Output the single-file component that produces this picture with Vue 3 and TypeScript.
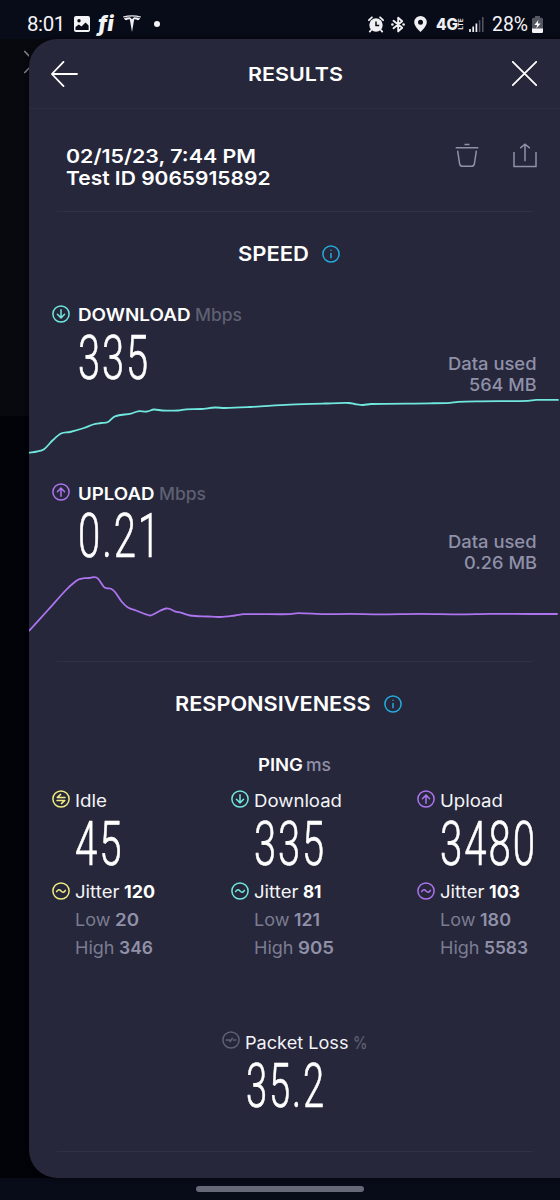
<script setup lang="ts">
import { h } from 'vue'

interface LabelProps { text: string; w: number; cap?: number }

// Single line of text in a box as tall as its capitals, fitted to a set width.
const Label = (p: LabelProps) => {
  const cap = p.cap ?? 12.5
  return h('svg', { class: 'label', width: p.w, height: cap, overflow: 'visible' }, [
    h('text', {
      x: 0, y: cap, textLength: p.w, lengthAdjust: 'spacingAndGlyphs',
      'font-size': cap / 0.727,
    }, p.text),
  ])
}
Label.props = ['text', 'w', 'cap']

const Digits = (p: { text: string; w: number }) =>
  h('svg', { class: 'digits', width: p.w, height: 45, overflow: 'visible' }, [
    h('text', { x: 1, y: 44.4, textLength: p.w, lengthAdjust: 'spacingAndGlyphs', 'font-size': 61.5 }, p.text),
  ])
Digits.props = ['text', 'w']

const glyphs: Record<string, string> = {
  down: 'M9 4.8V12.6M5.4 9.3L9 12.9L12.6 9.3',
  up: 'M9 13.2V5.2M5.4 8.7L9 5.1L12.6 8.7',
  idle: 'M13 7.6H5.2L8.6 4.4M5 10.4H12.8L9.4 13.6',
  wave: 'M4.6 9.7C6 7.2 7.6 7.4 9 9C10.4 10.6 12 10.8 13.4 8.3',
  loss: 'M4.2 9H7.6M7.2 8.8L8.2 10.6L10.3 7.2M11.4 9H13.8',
  info: 'M9 8.6V12.8M9 5.2V5.3',
}
const Ring = (p: { kind: string }) =>
  h('svg', { class: 'ring', width: 18, height: 18, viewBox: '0 0 18 18' }, [
    h('circle', { cx: 9, cy: 9, r: 8.1 }),
    h('path', { d: glyphs[p.kind] }),
  ])
Ring.props = ['kind']

type Pt = [number, number]
function smooth(pts: Pt[]): string {
  let d = `M${pts[0][0]} ${pts[0][1]}`
  for (let i = 0; i < pts.length - 1; i++) {
    const a = pts[Math.max(0, i - 1)], b = pts[i], c = pts[i + 1], e = pts[Math.min(pts.length - 1, i + 2)]
    const k = (c[0] - b[0]) / 3
    const s1 = (c[1] - a[1]) / (c[0] - a[0])
    const s2 = (e[1] - b[1]) / (e[0] - b[0])
    d += `C${b[0] + k} ${b[1] + k * s1} ${c[0] - k} ${c[1] - k * s2} ${c[0]} ${c[1]}`
  }
  return d
}

const downPts: Pt[] = [[29, 452.7], [37, 451.5], [44, 449.3], [53, 440], [61, 433.5], [70, 432], [84, 428], [93, 424.5], [101, 423], [108, 422], [115, 416.3], [131, 413.6], [138, 411.3], [147, 411.5], [154, 409.5], [162, 410.5], [178, 410.5], [186, 409.3], [201, 409], [215, 407.5], [225, 408], [250, 407], [290, 404.7], [325, 403.5], [349, 403], [356, 404.3], [363, 405], [371, 404], [430, 403.3], [450, 402.8], [458, 401.8], [480, 401.3], [528, 400.8], [536, 399.9], [558, 399.9]]
const upPts: Pt[] = [[29.5, 630.5], [48, 610], [66, 590], [73, 583.5], [79, 579.3], [84, 578.2], [89, 578], [94, 577.2], [98, 578.6], [104, 587], [107, 588.3], [111, 588.8], [115, 592], [122, 602], [128, 607.5], [136, 610.5], [150, 615.5], [154, 614], [160, 610.7], [166, 608.5], [170, 609], [175, 611.3], [181, 612.7], [190, 615.5], [208, 616.5], [220, 617], [235, 615.5], [244, 614.2], [290, 614.2], [298, 613.2], [325, 614.2], [350, 613.9], [380, 614.3], [420, 613.8], [460, 614.3], [490, 613.8], [530, 614], [557, 614]]

const speeds = [
  { name: 'DOWNLOAD', nameW: 112.5, kind: 'down', tone: 'teal', value: '335', valueW: 72, used: '564 MB', usedW: 67.5, box: '29 391 531 70', path: smooth(downPts) },
  { name: 'UPLOAD', nameW: 76.5, kind: 'up', tone: 'violet', value: '0.21', valueW: 84, used: '0.26 MB', usedW: 73, box: '29 569 531 70', path: smooth(upPts) },
]

const pings = [
  { name: 'Idle', nameW: 32, kind: 'idle', tone: 'yellow', value: '45', valueW: 48.5, jitter: '120', jitterW: 31, low: '20', lowW: 24, high: '346', highW: 34 },
  { name: 'Download', nameW: 88, kind: 'down', tone: 'teal', value: '335', valueW: 72, jitter: '81', jitterW: 18.5, low: '121', lowW: 26, high: '905', highW: 36 },
  { name: 'Upload', nameW: 63, kind: 'up', tone: 'violet', value: '3480', valueW: 97, jitter: '103', jitterW: 31, low: '180', lowW: 31, high: '5583', highW: 44 },
]
</script>

<template>
  <div class="screen">
    <div class="status">
      <div class="status-left">
        <span class="time">8:01</span>
        <svg class="s-photo" width="16" height="16" viewBox="0 0 16 16">
          <rect width="16" height="16" rx="2" fill="#f4f4f6" />
          <circle cx="5" cy="4.8" r="1.7" fill="#080b18" />
          <path d="M1.5 14V11L4.8 8.4L7.4 10.4L11.5 6.6L14.6 9.5V14Z" fill="#080b18" />
        </svg>
        <span class="fi">fi</span>
        <svg class="s-tesla" width="18" height="17" viewBox="0 0 18 17">
          <path d="M0 1.6Q9 -1.3 18 1.6L17.6 2.6Q9 .2 .4 2.6ZM.9 3.3Q4 2.2 7 2.2L9 4.2L11 2.2Q14 2.2 17.1 3.3Q16.3 5.2 14.6 5.2Q13.6 4.2 11.2 4.2L9 17L6.8 4.2Q4.4 4.2 3.4 5.2Q1.7 5.2 .9 3.3Z" fill="#eeeef2" />
        </svg>
        <i class="dot" />
      </div>
      <div class="status-right">
        <svg width="16" height="17" viewBox="0 0 16 17">
          <circle cx="8" cy="9" r="6.7" fill="#f0f0f2" />
          <path d="M8 5.6V9.4H11.2" fill="none" stroke="#080b18" stroke-width="1.5" />
          <path d="M.9 4.2L3.9 1.3M15.1 4.2L12.1 1.3M3.2 14L1.8 15.6M12.8 14L14.2 15.6" stroke="#f0f0f2" stroke-width="1.8" stroke-linecap="round" />
        </svg>
        <svg class="s-bt" width="14" height="17" viewBox="0 0 14 17">
          <path d="M2.5 4.8L11.2 11.8L7.2 15.4V1.6L11.2 5.2L2.5 12.2" fill="none" stroke="#f0f0f2" stroke-width="1.9" stroke-linejoin="round" stroke-linecap="round" />
          <circle cx="1.4" cy="8.5" r="1.3" fill="#f0f0f2" /><circle cx="12.6" cy="8.5" r="1.3" fill="#f0f0f2" />
        </svg>
        <svg class="s-pin" width="13" height="16" viewBox="0 0 13 16">
          <path fill-rule="evenodd" d="M6.5 0A6.3 6.3 0 0 1 12.8 6.3C12.8 10.6 6.5 16 6.5 16S.2 10.6 .2 6.3A6.3 6.3 0 0 1 6.5 0ZM6.5 3.8A2.5 2.5 0 1 0 6.5 8.8A2.5 2.5 0 1 0 6.5 3.8Z" fill="#f0f0f2" />
        </svg>
        <span class="net"><svg width="28" height="12" overflow="visible"><text class="g4" x="0" y="11.6" textLength="22" lengthAdjust="spacingAndGlyphs">4G</text><text class="lte" transform="translate(27 11.8) rotate(-90)" textLength="11.5" lengthAdjust="spacingAndGlyphs">LTE</text></svg></span>
        <svg class="s-sig" width="15" height="15" viewBox="0 0 15 15">
          <path d="M1 12V15M4.2 9.5V15M7.4 6.5V15" stroke="#f0f0f2" stroke-width="1.7" />
          <path d="M10.6 3.2V15M13.8 0V15" stroke="#555864" stroke-width="1.5" />
        </svg>
        <span class="pct"><svg width="36" height="15" overflow="visible"><text x="0" y="14.4" textLength="36" lengthAdjust="spacingAndGlyphs">28%</text></svg></span>
        <svg class="s-bat" width="11" height="17" viewBox="0 0 11 17">
          <path d="M3 0H8V1.8H9.5A1.5 1.5 0 0 1 11 3.3V15.5A1.5 1.5 0 0 1 9.5 17H1.5A1.5 1.5 0 0 1 0 15.5V3.3A1.5 1.5 0 0 1 1.5 1.8H3Z" fill="#555862" />
          <path d="M0 12.6H11V15.5A1.5 1.5 0 0 1 9.5 17H1.5A1.5 1.5 0 0 1 0 15.5Z" fill="#f4f4f6" />
          <path d="M6.4 4L2.4 9H5.1L4.4 12.4L8.6 7.6H5.8Z" fill="#fff" />
        </svg>
      </div>
    </div>

    <div class="stage">
      <div class="behind">
        <svg width="29" height="40" viewBox="0 0 29 40"><path d="M24.3 12L34.8 23L24.3 34" fill="none" stroke="#85858c" stroke-width="1.5" /></svg>
      </div>
      <main class="sheet">
        <header class="bar">
          <svg width="27" height="26" viewBox="0 0 27 26"><path d="M26 13H1M12.5 .8L.9 13L12.5 25.2" /></svg>
          <Label class="strong title" text="RESULTS" :w="95" :cap="14" />
          <svg width="25" height="25" viewBox="0 0 25 25"><path d="M.8 .8L24.2 24.2M24.2 .8L.8 24.2" /></svg>
        </header>

        <section class="meta">
          <div class="meta-text">
            <Label class="strong" text="02/15/23, 7:44 PM" :w="190" :cap="14" />
            <Label class="strong" text="Test ID 9065915892" :w="204.5" :cap="14" />
          </div>
          <div class="actions">
            <svg width="24" height="25" viewBox="0 0 24 25"><path d="M.7 4.8H23.3M9.5 1.4H14.5M2.6 7.6L4.6 20.6Q5 23.3 7.6 23.3H16.4Q19 23.3 19.4 20.6L21.4 7.6" /></svg>
            <svg width="24" height="25" viewBox="0 0 24 25"><path d="M1 9V23.6H23V9M12 18.2V1.4M7.2 5.2L12 1.2L16.8 5.2" /></svg>
          </div>
        </section>

        <section class="speed">
          <div class="heading"><Label class="strong" text="SPEED" :w="71" :cap="14.3" /><Ring class="blue" kind="info" /></div>
          <div v-for="s in speeds" :key="s.name" class="block">
            <div class="row">
              <Ring :class="s.tone" :kind="s.kind" />
              <Label class="strong" :text="s.name" :w="s.nameW" />
              <Label class="dim unit" text="Mbps" :w="47" />
            </div>
            <div class="result">
              <Digits :text="s.value" :w="s.valueW" />
              <div class="used">
                <Label class="grey" text="Data used" :w="88.5" />
                <Label class="grey" :text="s.used" :w="s.usedW" />
              </div>
            </div>
            <svg class="chart" :class="s.tone" width="531" height="70" :viewBox="s.box"><path :d="s.path" /></svg>
          </div>
        </section>

        <section class="resp">
          <div class="heading wide"><Label class="strong" text="RESPONSIVENESS" :w="195.5" :cap="14.3" /><Ring class="blue" kind="info" /></div>
          <div class="ping"><Label class="strong" text="PING" :w="45" /><Label class="grey" text="ms" :w="25" /></div>
          <div class="grid">
            <div v-for="p in pings" :key="p.name" class="col">
              <div class="row tight"><Ring :class="p.tone" :kind="p.kind" /><Label class="plain" :text="p.name" :w="p.nameW" /></div>
              <Digits :text="p.value" :w="p.valueW" />
              <div class="row tight jit"><Ring :class="p.tone" kind="wave" /><Label class="plain" text="Jitter" :w="44.5" /><Label class="bold" :text="p.jitter" :w="p.jitterW" /></div>
              <div class="stat"><Label class="faint" text="Low" :w="35.5" /><Label class="faint-bold" :text="p.low" :w="p.lowW" /></div>
              <div class="stat"><Label class="faint" text="High" :w="39.5" /><Label class="faint-bold" :text="p.high" :w="p.highW" /></div>
            </div>
          </div>
          <div class="loss">
            <div class="row tight"><Ring class="mute" kind="loss" /><Label class="plain" text="Packet Loss" :w="103.5" /><Label class="dim pc" text="%" :w="14.5" /></div>
            <Digits text="35.2" :w="80" />
          </div>
        </section>
      </main>
    </div>
    <div class="nav"><i /></div>
  </div>
</template>

<style>
body { margin: 0; background: #080b18; }
</style>

<style scoped>
.screen { width: 560px; height: 1200px; overflow: hidden; display: flex; flex-direction: column; background: #080b18; font-family: Inter, "Liberation Sans", sans-serif; }
svg { display: block; flex: none; }
.status { height: 39px; flex: none; display: flex; justify-content: space-between; padding: 0 17px 0 27px; box-sizing: border-box; color: #f4f4f6; font-family: Roboto, sans-serif; }
.status-left, .status-right { display: flex; align-items: center; height: 48px; }
.time { font-size: 20.5px; line-height: 48px; width: 47px; letter-spacing: -.4px; }
.fi { font: italic 900 20.5px/44px Inter, sans-serif; margin-left: 8px; width: 17px; letter-spacing: .2px; }
.s-tesla { margin-left: 8px; margin-top: -1px; }
.dot { width: 6px; height: 6px; border-radius: 50%; background: #f4f4f6; margin-left: 13px; }
.s-bt { margin-left: 7px; }
.s-pin { margin-left: 9px; }
.net { margin-left: 9px; }
.g4 { font: 800 16px Inter, sans-serif; fill: #f0f0f2; }
.lte { font: 700 5.5px Inter, sans-serif; fill: #f0f0f2; transform-box: view-box; }
.s-sig { margin-left: 5px; }
.pct { margin-left: 8px; }
.pct text { font-size: 20.5px; fill: #f4f4f6; }
.s-bat { margin-left: 4px; }

.stage { height: 1139px; flex: none; display: flex; background: linear-gradient(#08090f 377px, #020308 377px); }
.behind { width: 29px; flex: none; }
.sheet { width: 531px; height: 1139px; background: #26273a; border-radius: 28px 0 0 28px; overflow: hidden; box-shadow: 0 0 5px rgba(0, 0, 0, .6); }
.bar { height: 69px; border-bottom: 1px solid #2c2d41; display: flex; align-items: center; justify-content: space-between; padding: 0 23px 0 22px; }
.bar path { fill: none; stroke: #fff; stroke-width: 1.8; stroke-linecap: round; stroke-linejoin: round; }
.title { margin-left: 1px; }

.label { font-weight: 500; }
.strong { fill: #fff; font-weight: 560; }
.plain { fill: #f4f4f8; font-weight: 400; }
.bold { fill: #fff; font-weight: 650; }
.grey { fill: #9091a9; font-weight: 480; }
.dim { fill: #5f6073; font-weight: 450; }
.faint { fill: #7b7c92; font-weight: 400; }
.faint-bold { fill: #9091a9; font-weight: 600; }
.digits { fill: #fff; stroke: #fff; stroke-width: .7px; stroke-linejoin: round; font-family: Roboto, sans-serif; font-weight: 340; letter-spacing: 3px; }

.meta { height: 102px; margin: 0 27px 0 28px; border-bottom: 1px solid #303145; display: flex; justify-content: space-between; }
.meta-text { padding: 40px 0 0 8.5px; display: flex; flex-direction: column; gap: 7.7px; }
.actions { display: flex; gap: 34px; padding: 34px 0 0; margin-right: -4px; }
.actions path { fill: none; stroke: #9091a9; stroke-width: 1.5; }

.speed { height: 449px; box-sizing: border-box; }
.heading { height: 92.5px; padding: 34.5px 0 0 208.5px; box-sizing: border-box; display: flex; align-items: flex-start; gap: 13.3px; }
.heading .ring { margin-top: -2px; }
.heading.wide { padding-left: 146px; height: 96px; }
.block { height: 178.2px; }
.row { display: flex; align-items: flex-end; height: 18px; padding-left: 23.3px; }
.row .label { margin-bottom: 1.7px; }
.row .ring + .label { margin-left: 7.3px; }
.row .unit { margin-left: 4.7px; }
.result { display: flex; justify-content: space-between; margin-top: 12.4px; height: 56px; padding: 0 23.3px 0 48px; }
.used { display: flex; flex-direction: column; align-items: flex-end; gap: 8.5px; padding-top: 22.4px; }
.chart path { fill: none; stroke-width: 1.8; stroke-linecap: round; stroke-linejoin: round; }

.ring { fill: none; stroke: currentColor; stroke-width: 1.5; stroke-linecap: round; stroke-linejoin: round; }
.teal { color: #66e6da; stroke: #70e8de; }
.violet { color: #b070f2; stroke: #ad74f0; }
.yellow { color: #f1ec80; stroke: #f1ec80; }
.blue { color: #27a9dd; stroke: #27a9dd; }
.mute { color: #5f6074; stroke: #5f6074; }

.speed .block:last-child { height: 178.1px; }
.resp::before { content: ""; display: block; height: 1px; margin: 0 27px 0 28px; background: #303145; }
.ping { display: flex; gap: 3.5px; padding-left: 228.5px; height: 31.5px; }
.grid { display: grid; grid-template-columns: 179px 186px 1fr; padding-left: 23px; height: 241.7px; }
.row.tight { padding-left: 0; }
.row.tight .label { margin-bottom: 1.2px; }
.row.tight .ring + .label { margin-left: 4.6px; }
.col .digits { margin: 13.7px 0 0 22px; }
.jit { margin-top: 16px; }
.row.jit .label { margin-bottom: 2.6px; }
.jit .bold { margin-left: 5px; }
.stat { display: flex; gap: 4.5px; padding-left: 22.6px; margin-top: 15.7px; }
.jit + .stat { margin-top: 12.9px; }
.loss { margin: 0 27px 0 28px; padding-left: 165px; height: 120px; border-bottom: 1px solid #303145; }
.loss .pc { margin-left: 4.5px; }
.loss .digits { margin: 13.4px 0 0 22.5px; }

.nav { height: 22px; flex: none; display: flex; justify-content: center; align-items: flex-start; }
.nav i { width: 168px; height: 6px; margin-top: 8px; border-radius: 3px; background: #686978; }
</style>
